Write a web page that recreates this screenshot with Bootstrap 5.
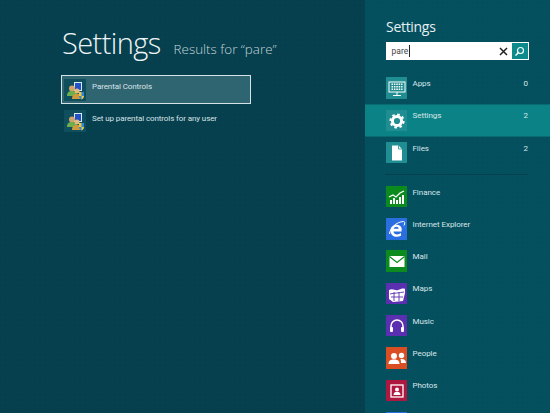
<!DOCTYPE html>
<html lang="en">
<head>
  <meta charset="UTF-8">
  <title>Settings search</title>
  <link href="https://cdn.jsdelivr.net/npm/bootstrap@5.3.0/dist/css/bootstrap.min.css" rel="stylesheet">
  <style>
    html, body { height: 413px; overflow: hidden; }
    body { background: #063f4e; font-family: "Open Sans", "Liberation Sans", sans-serif; color: #e6f0f2; }
    .shell { width: 550px; height: 413px; }
    .results { width: 365px; padding: 22px 0 0 61px; background-image: radial-gradient(rgba(255,255,255,.02) .7px, transparent .8px); background-size: 5px 5px; }
    .big-title { font-size: 29px; font-weight: 300; line-height: 42px; letter-spacing: -.6px; margin: 0 0 0 1px; color: #eef5f6; }
    .sub-title { font-size: 13.4px; font-weight: 300; margin-left: 13px; color: #c3d5d9; }
    .hit { width: 190px; height: 30px; margin-top: 2px; padding: 3px; font-family: Roboto, sans-serif; font-size: 8px; letter-spacing: -.1px; color: #d8e4e7; }
    .hit-on { background: #2f6471; outline: 1.5px solid #d5e3e6; outline-offset: -1.5px; margin-top: 11px; width: 190px; height: 29px; }
    .hit-label { margin: -5px 0 0 6px; }
    .prog-icon { width: 22px; height: 22px; background: #0f4e5c; flex: none; }
    .pane { width: 185px; background: #04505f; background-image: radial-gradient(rgba(0,0,0,.07) .7px, transparent .8px); background-size: 5px 5px; }
    .pane-title { font-size: 14px; font-weight: 400; line-height: 20px; letter-spacing: -.3px; margin: 17px 0 0 21px; color: #e6eff1; }
    .searchbox { width: 143px; height: 18px; margin: 5px 0 0 20.5px; background: #fff; font-family: Roboto, sans-serif; font-size: 8.5px; color: #444; padding-left: 6px; }
    .caret-bar { width: 1px; height: 12px; background: #222; margin-left: 1px; }
    .clear-x { margin-left: auto; margin-right: 4px; }
    .go-btn { width: 16px; height: 16px; margin-right: 1px; background: #0d8a8c; }
    .scope { height: 32.3px; padding-left: 20.5px; padding-right: 22px; font-family: Roboto, sans-serif; font-size: 8px; letter-spacing: -.05px; color: #d8e6e9; }
    .scope-first { margin-top: 12px; }
    .scope-on { background: #0b8386; box-shadow: inset 0 1px #0a6a72, inset 0 -1px #0a6a72; }
    .scope-gap { height: 11.5px; padding-top: 5.5px; margin: 0 22px 0 20px; }
    .scope-line { height: 1px; background: #04404e; }
    .tile { width: 21.5px; height: 21.5px; flex: none; }
    .tile-soft { background: #1f8d91; }
    .tile-green { background: #0b8a1e; }
    .tile-blue { background: #2a6fe0; }
    .tile-purple { background: #5a2fb0; }
    .tile-orange { background: #d94f23; }
    .tile-red { background: #ad1740; }
    .tile-label { margin: -8px 0 0 5.500px; }
    .tile-count { margin: -8px 0 0 auto; }
  </style>
</head>
<body>
<div class="shell d-flex">

  <div class="results">
    <div class="d-flex align-items-baseline">
      <h1 class="big-title">Settings</h1>
      <span class="sub-title">Results for “pare”</span>
    </div>

    <div class="hit hit-on d-flex align-items-center">
      <div class="prog-icon"><svg width="22" height="22" viewBox="0 0 22 22"><rect x="10" y="3" width="8" height="9" fill="#d8e8f4"/><rect x="11" y="4" width="6" height="7" fill="#2450c8"/><circle cx="8" cy="9.500" r="3" fill="#cfa468"/><path d="M3 17c0-4 2-5 5-5s5 1 5 5z" fill="#6fae4c"/><circle cx="13" cy="12" r="2.500" fill="#e0bc80"/><path d="M8 20c0-4 2-5 5-5s4 1 4 5z" fill="#d09a3c"/><path d="M15 13h5v4c0 2-1.500 3-2.500 3.500-1-.5-2.500-1.500-2.500-3.500z" fill="#2f86d8"/><path d="M17.500 13v4H15v-4zM17.500 17h2.500c0 2-1.500 3-2.500 3.500z" fill="#f0c838"/></svg></div>
      <span class="hit-label">Parental Controls</span>
    </div>
    <div class="hit d-flex align-items-center">
      <div class="prog-icon"><svg width="22" height="22" viewBox="0 0 22 22"><rect x="10" y="3" width="8" height="9" fill="#d8e8f4"/><rect x="11" y="4" width="6" height="7" fill="#2450c8"/><circle cx="8" cy="9.500" r="3" fill="#cfa468"/><path d="M3 17c0-4 2-5 5-5s5 1 5 5z" fill="#6fae4c"/><circle cx="13" cy="12" r="2.500" fill="#e0bc80"/><path d="M8 20c0-4 2-5 5-5s4 1 4 5z" fill="#d09a3c"/><path d="M15 13h5v4c0 2-1.500 3-2.500 3.500-1-.5-2.500-1.500-2.500-3.500z" fill="#2f86d8"/><path d="M17.500 13v4H15v-4zM17.500 17h2.500c0 2-1.500 3-2.500 3.500z" fill="#f0c838"/></svg></div>
      <span class="hit-label">Set up parental controls for any user</span>
    </div>
  </div>

  <div class="pane">
    <div class="pane-title">Settings</div>
    <div class="searchbox d-flex align-items-center">
      <span>pare</span><span class="caret-bar"></span>
      <svg class="clear-x" width="9" height="9" viewBox="0 0 9 9"><path d="M1 1l7 7M8 1l-7 7" stroke="#222" stroke-width="1.500"/></svg>
      <div class="go-btn d-flex align-items-center justify-content-center"><svg width="11" height="11" viewBox="0 0 11 11"><circle cx="6.500" cy="4.500" r="3" fill="none" stroke="#fff" stroke-width="1.200"/><path d="M4.300 6.700L1.500 9.500" stroke="#fff" stroke-width="1.500"/></svg></div>
    </div>

    <div class="scope scope-first d-flex align-items-center">
      <div class="tile tile-soft"><svg width="22" height="22" viewBox="0 0 22 22"><rect x="3" y="5" width="16" height="10" fill="none" stroke="#fff"/><path d="M5.500 7.300h11M5.500 9.800h11M5.500 12.300h11" stroke="#fff" stroke-width="1.500" stroke-dasharray="1.500 .9"/><path d="M11 15v3M7 18.500h8" stroke="#fff"/></svg></div>
      <span class="tile-label">Apps</span><span class="tile-count">0</span>
    </div>
    <div class="scope scope-on d-flex align-items-center">
      <div class="tile tile-soft"><svg width="22" height="22" viewBox="0 0 22 22"><circle cx="11" cy="11" r="4.600" fill="none" stroke="#fff" stroke-width="3"/><circle cx="11" cy="11" r="6.600" fill="none" stroke="#fff" stroke-width="2" stroke-dasharray="2.600 2.580"/></svg></div>
      <span class="tile-label">Settings</span><span class="tile-count">2</span>
    </div>
    <div class="scope d-flex align-items-center">
      <div class="tile tile-soft"><svg width="22" height="22" viewBox="0 0 22 22"><path d="M6 3.500h6.500l3.500 3.500v11.500H6z" fill="#fff"/><path d="M12.500 3.500V7H16" fill="none" stroke="#1f8d91" stroke-width=".8"/></svg></div>
      <span class="tile-label">Files</span><span class="tile-count">2</span>
    </div>
    <div class="scope-gap"><div class="scope-line"></div></div>

    <div class="scope d-flex align-items-center">
      <div class="tile tile-green"><svg width="22" height="22" viewBox="0 0 22 22"><path d="M3 11l4-2 3 2 4-4 4-2" fill="none" stroke="#fff" stroke-width="1.300"/><path d="M4 18v-4h2v4zm3 0v-6h2v6zm3 0v-4h2v4zm3 0v-7h2v7zm3 0V9h2v9z" fill="#fff"/></svg></div>
      <span class="tile-label">Finance</span>
    </div>
    <div class="scope d-flex align-items-center">
      <div class="tile tile-blue"><svg width="22" height="22" viewBox="0 0 22 22"><path d="M15.500 13.500h-8c.2 3 4.500 4 7.500 1.600v2.600c-5 2.600-10.500.4-10.500-5 0-5.200 5.500-8 10-4.500 1.300 1.200 1.400 3.200 1 5.300zM7.700 10.800h5c0-2.800-4.500-2.800-5 0z" fill="#fff"/><path d="M3.500 16C4 10 10 4 17.500 3.500c1.500 0 1.500 2 .5 4" fill="none" stroke="#fff"/></svg></div>
      <span class="tile-label">Internet Explorer</span>
    </div>
    <div class="scope d-flex align-items-center">
      <div class="tile tile-green"><svg width="22" height="22" viewBox="0 0 22 22"><rect x="3.500" y="6" width="15" height="11" fill="#fff"/><path d="M3.500 6.500L11 12.500l7.500-6" fill="none" stroke="#0b8a1e" stroke-width="1.200"/></svg></div>
      <span class="tile-label">Mail</span>
    </div>
    <div class="scope d-flex align-items-center">
      <div class="tile tile-purple"><svg width="22" height="22" viewBox="0 0 22 22"><path d="M3 7c4-2 6 1 9 0s5-2 7-1v4l-2 8-10 1-4-3z" fill="#fff"/><path d="M4 11c4-1 9-1 14-2M8 9v9M13 9v9M5 14h12" fill="none" stroke="#5a2fb0" stroke-width=".9"/></svg></div>
      <span class="tile-label">Maps</span>
    </div>
    <div class="scope d-flex align-items-center">
      <div class="tile tile-purple"><svg width="22" height="22" viewBox="0 0 22 22"><path d="M5 13v-2a6 6 0 0 1 12 0v2" fill="none" stroke="#fff" stroke-width="1.500"/><rect x="4" y="12" width="3" height="5" rx="1" fill="#fff"/><rect x="15" y="12" width="3" height="5" rx="1" fill="#fff"/></svg></div>
      <span class="tile-label">Music</span>
    </div>
    <div class="scope d-flex align-items-center">
      <div class="tile tile-orange"><svg width="22" height="22" viewBox="0 0 22 22"><circle cx="8" cy="9" r="3" fill="#fff"/><circle cx="15.500" cy="8.500" r="2.700" fill="#fff"/><path d="M2.500 17c0-3.500 2-4.500 5.500-4.500s5.500 1 5.500 4.500z" fill="#fff"/><path d="M14.500 12c3-.5 5.500.5 5.500 4h-5c0-1.500-.2-3-.5-4z" fill="#fff"/></svg></div>
      <span class="tile-label">People</span>
    </div>
    <div class="scope d-flex align-items-center">
      <div class="tile tile-red"><svg width="22" height="22" viewBox="0 0 22 22"><rect x="5" y="5" width="12" height="12" fill="none" stroke="#fff" stroke-width="1.300"/><circle cx="11" cy="9.500" r="2" fill="#fff"/><path d="M7.500 15c0-2.500 1.500-3 3.500-3s3.500.5 3.500 3z" fill="#fff"/></svg></div>
      <span class="tile-label">Photos</span>
    </div>
    <div class="scope d-flex align-items-center">
      <div class="tile tile-blue"></div>
    </div>
  </div>

</div>
<script src="https://cdn.jsdelivr.net/npm/bootstrap@5.3.0/dist/js/bootstrap.bundle.min.js"></script>
</body>
</html>
